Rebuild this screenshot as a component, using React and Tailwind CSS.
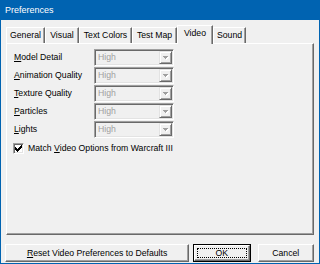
export default function App() {
  const rows = [
    ["M", "odel Detail"],
    ["A", "nimation Quality"],
    ["T", "exture Quality"],
    ["P", "articles"],
    ["L", "ights"],
  ];
  const tabs = [
    ["General", "w-[39px]"],
    ["Visual", "w-[34px]"],
    ["Text Colors", "w-[53px]"],
    ["Test Map", "w-[45px]"],
    ["Video", "w-[36px]"],
    ["Sound", "w-[33px]"],
  ];
  return (
    <div className="w-[320px] h-[264px] bg-[#0063b1] flex flex-col px-[1px] pb-[1px] font-['Liberation_Sans',Arial,sans-serif] text-[8.7px] leading-none text-black select-none">
      <div className="h-[20px] shrink-0 flex items-center pl-[4px] text-white text-[9px]">Preferences</div>
      <div className="flex-1 bg-[#f0f0f0] flex flex-col px-[5px] pt-[5px] pb-[1px]">
        <div className="flex items-end h-[18px] relative z-10">
          {tabs.map(([t, w]) =>
            t === "Video" ? (
              <div
                key={t}
                className={`${w} h-[19px] -mb-[1px] bg-[#f0f0f0] border-t border-l border-r border-t-white border-l-white border-r-[#696969] shadow-[inset_-1px_0_0_#a0a0a0] flex items-center justify-center pb-[3px]`}
              >
                {t}
              </div>
            ) : (
              <div
                key={t}
                className={`${w} h-[16px] border-t border-l border-r border-t-white border-l-white border-r-[#696969] shadow-[inset_-1px_0_0_#a0a0a0] flex items-center justify-center`}
              >
                {t}
              </div>
            )
          )}
        </div>
        <div className="h-[192px] shrink-0 border border-t-white border-l-white border-r-[#696969] border-b-[#696969] shadow-[inset_-1px_-1px_0_#a0a0a0] flex flex-col gap-[1px] pl-[7px] pt-[5px]">
          {rows.map(([u, rest]) => (
            <div key={rest} className="flex items-center h-[17px]">
              <div className="w-[80px]">
                <span className="underline underline-offset-[1px]">{u}</span>
                {rest}
              </div>
              <div className="w-[80px] h-[17px] border border-t-[#a0a0a0] border-l-[#a0a0a0] border-r-white border-b-white shadow-[inset_1px_1px_0_#696969,inset_-1px_-1px_0_#e3e3e3] flex items-center p-[1px]">
                <span className="flex-1 pl-[2px] text-[#a0a0a0]">High</span>
                <div className="w-[13px] h-full border border-t-[#e3e3e3] border-l-[#e3e3e3] border-r-[#696969] border-b-[#696969] shadow-[inset_1px_1px_0_#ffffff,inset_-1px_-1px_0_#a0a0a0] flex items-center justify-center">
                  <svg width="6" height="4" viewBox="0 0 6 4" className="mt-[1px]">
                    <path d="M1 1h5v1H1zM2 2h3v1H2zM3 3h1v1H3z" fill="#ffffff" />
                    <path d="M0 0h5v1H0zM1 1h3v1H1zM2 2h1v1H2z" fill="#a0a0a0" />
                  </svg>
                </div>
              </div>
            </div>
          ))}
          <div className="flex items-center h-[13px] mt-[3px] -ml-[1px]">
            <div className="w-[11px] h-[11px] border border-t-[#a0a0a0] border-l-[#a0a0a0] border-r-white border-b-white shadow-[inset_1px_1px_0_#696969,inset_-1px_-1px_0_#e3e3e3] bg-white flex items-center justify-center">
              <svg width="7" height="7" viewBox="0 0 7 7">
                <path d="M6 0h1v1H6zM5 1h2v1H5zM0 2h1v1H0zM4 2h3v1H4zM0 3h2v1H0zM3 3h3v1H3zM0 4h5v1H0zM1 5h3v1H1zM2 6h1v1H2z" fill="#000" />
              </svg>
            </div>
            <div className="ml-[4px]">
              Match <span className="underline underline-offset-[1px]">V</span>ideo Options from Warcraft III
            </div>
          </div>
        </div>
        <div className="flex h-[18px] mt-[9px] -ml-[1px]">
          <div className="w-[186px] h-[18px] border border-t-white border-l-white border-r-[#696969] border-b-[#696969] shadow-[inset_-1px_-1px_0_#a0a0a0] flex items-center justify-center">
            <span>
              <span className="underline underline-offset-[1px]">R</span>eset Video Preferences to Defaults
            </span>
          </div>
          <div className="w-[58px] h-[18px] ml-[4px] border border-black">
            <div className="h-full border border-t-white border-l-white border-r-[#696969] border-b-[#696969] shadow-[inset_-1px_-1px_0_#a0a0a0] p-[2px]">
              <div className="w-full h-full border border-dotted border-black flex items-center justify-center">OK</div>
            </div>
          </div>
          <div className="w-[57px] h-[18px] ml-[7px] border border-t-white border-l-white border-r-[#696969] border-b-[#696969] shadow-[inset_-1px_-1px_0_#a0a0a0] flex items-center justify-center">
            Cancel
          </div>
        </div>
      </div>
    </div>
  );
}
